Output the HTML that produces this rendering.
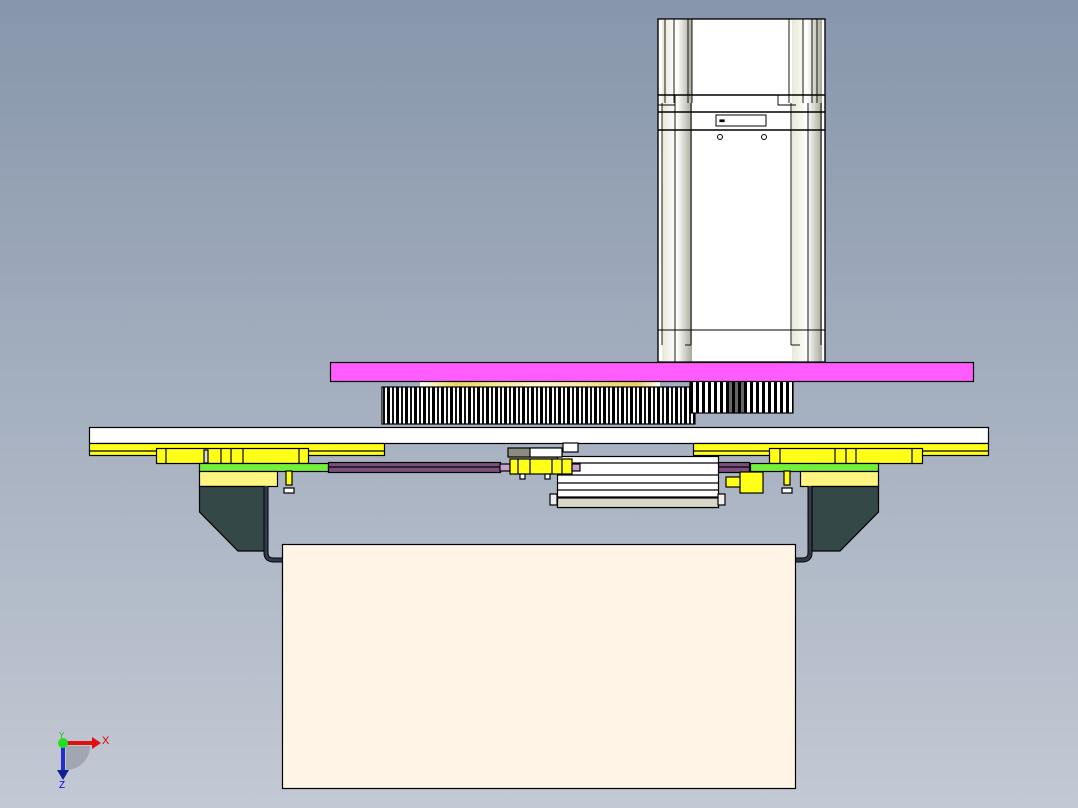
<!DOCTYPE html>
<html><head><meta charset="utf-8"><style>
html,body{margin:0;padding:0;width:1078px;height:808px;overflow:hidden}
body{background:linear-gradient(#8796ab,#c3c9d4)}
svg{display:block}
</style></head><body>
<svg width="1078" height="808" viewBox="0 0 1078 808" xmlns="http://www.w3.org/2000/svg" stroke="#000" stroke-width="1.2">
<defs>
<pattern id="g" width="9" height="40" patternUnits="userSpaceOnUse"><rect width="9" height="40" fill="#fff" stroke="none"/><rect x="0" width="3" height="40" fill="#000" stroke="none"/><rect x="5" width="2" height="40" fill="#111" stroke="none"/></pattern>
<pattern id="g2" width="6" height="40" patternUnits="userSpaceOnUse"><rect width="6" height="40" fill="#fff" stroke="none"/><rect x="0" width="3" height="40" fill="#000" stroke="none"/></pattern>
<linearGradient id="cyl" x1="0" x2="1"><stop offset="0" stop-color="#e8e8d8"/><stop offset=".5" stop-color="#fff"/><stop offset="1" stop-color="#a8a898"/></linearGradient>
<linearGradient id="gold" x1="0" x2="1"><stop offset="0" stop-color="#fff"/><stop offset=".15" stop-color="#e8d860"/><stop offset=".5" stop-color="#fff8d0"/><stop offset=".9" stop-color="#e8d060"/><stop offset="1" stop-color="#fff"/></linearGradient>
</defs>
<!-- motor -->
<rect x="658" y="19" width="167" height="343" fill="#fff"/>
<rect x="662" y="19" width="30" height="343" fill="url(#cyl)" stroke="none"/>
<rect x="792" y="19" width="30" height="343" fill="url(#cyl)" stroke="none"/>
<rect x="658" y="19" width="167" height="343" fill="none"/>
<g fill="none" stroke-width="0.9">
<line x1="665" y1="19" x2="665" y2="103"/><line x1="674" y1="19" x2="674" y2="103"/><line x1="688" y1="19" x2="688" y2="103"/><line x1="692" y1="19" x2="692" y2="103"/>
<line x1="789" y1="19" x2="789" y2="103"/><line x1="803" y1="19" x2="803" y2="103"/><line x1="812" y1="19" x2="812" y2="103"/><line x1="817" y1="19" x2="817" y2="103"/>
<line x1="662" y1="103" x2="662" y2="345"/><line x1="675" y1="103" x2="675" y2="362"/><line x1="691" y1="103" x2="691" y2="345"/>
<line x1="791" y1="103" x2="791" y2="345"/><line x1="808" y1="103" x2="808" y2="362"/><line x1="821" y1="103" x2="821" y2="345"/>
<line x1="658" y1="330" x2="825" y2="330"/><line x1="685" y1="345" x2="691" y2="345"/><line x1="791" y1="345" x2="800" y2="345"/>
<polyline points="658,105 675,105 675,95"/><polyline points="778,95 778,105 796,105"/>
</g>
<g stroke-width="1.6"><line x1="658" y1="95" x2="825" y2="95"/><line x1="658" y1="112" x2="825" y2="112"/><line x1="658" y1="130" x2="825" y2="130"/></g>
<rect x="716" y="115" width="50" height="11" fill="none" stroke-width="1"/>
<rect x="720" y="120" width="4" height="1.5" fill="#000"/>
<circle cx="720" cy="137" r="2.5" fill="none" stroke-width="1"/><circle cx="764" cy="137" r="2.5" fill="none" stroke-width="1"/>
<!-- gears -->
<rect x="420" y="381" width="240" height="7" fill="url(#gold)" stroke="none"/>
<rect x="382" y="387" width="313" height="37" fill="url(#g)"/>
<rect x="690" y="381" width="103" height="32" fill="url(#g2)"/>
<rect x="727" y="381" width="20" height="32" fill="#000" stroke="none" opacity=".6"/>
<!-- pink -->
<rect x="330.5" y="362.5" width="643" height="19" fill="#ff5cff"/>
<!-- plate -->
<rect x="89.5" y="427.5" width="899" height="16" fill="#fff"/>
<rect x="89.5" y="443.5" width="295" height="12" fill="#ffff18"/><line x1="89" y1="451" x2="384" y2="451"/>
<rect x="693.5" y="443.5" width="295" height="12" fill="#ffff18"/><line x1="693" y1="451" x2="988" y2="451"/>
<!-- blocks -->
<rect x="156.5" y="448.5" width="152" height="15" fill="#ffff18"/>
<line x1="166" y1="448" x2="166" y2="463"/><line x1="221" y1="448" x2="221" y2="463"/><line x1="231" y1="448" x2="231" y2="463"/><line x1="243" y1="448" x2="243" y2="463"/><line x1="299" y1="448" x2="299" y2="463"/>
<rect x="204" y="450" width="4" height="13" fill="#ddd"/>
<rect x="769.5" y="448.5" width="153" height="15" fill="#ffff18"/>
<line x1="780" y1="448" x2="780" y2="463"/><line x1="835" y1="448" x2="835" y2="463"/><line x1="846" y1="448" x2="846" y2="463"/><line x1="856" y1="448" x2="856" y2="463"/><line x1="912" y1="448" x2="912" y2="463"/>
<!-- green / light yellow / dark -->
<rect x="199.5" y="463.5" width="129" height="8" fill="#74f03c"/>
<rect x="199.5" y="471.5" width="78" height="15" fill="#fff580"/>
<polygon points="199.5,486.5 265,486.5 265,551 238,551 199.5,512" fill="#344848"/>
<rect x="750.5" y="463.5" width="128" height="8" fill="#74f03c"/>
<rect x="800.5" y="471.5" width="78" height="15" fill="#fff580"/>
<polygon points="812,486.5 878.5,486.5 878.5,512 840,551 812,551" fill="#344848"/>
<!-- pipes -->
<path d="M266 486 V553 Q266 560 274 560 H283" fill="none" stroke="#000" stroke-width="5"/>
<path d="M266 486 V553 Q266 560 274 560 H283" fill="none" stroke="#333a4c" stroke-width="3"/>
<path d="M810 486 V553 Q810 560 802 560 H795" fill="none" stroke="#000" stroke-width="5"/>
<path d="M810 486 V553 Q810 560 802 560 H795" fill="none" stroke="#333a4c" stroke-width="3"/>
<!-- bolts -->
<rect x="286" y="471" width="6" height="14" fill="#ffff18"/><rect x="284" y="488" width="10" height="5" fill="#fff"/>
<rect x="784" y="471" width="6" height="14" fill="#ffff18"/><rect x="782" y="488" width="10" height="5" fill="#fff"/>
<!-- rods -->
<rect x="328.5" y="462.5" width="172" height="10" fill="#7a4f7e"/><line x1="328" y1="467" x2="500" y2="467"/>
<rect x="579.5" y="462.5" width="170" height="10" fill="#7a4f7e"/><line x1="579" y1="467" x2="749" y2="467"/>
<!-- cylinder -->
<rect x="557.5" y="456.5" width="161" height="51" fill="#fff"/>
<line x1="557" y1="463" x2="718" y2="463"/><line x1="557" y1="475" x2="718" y2="475"/><line x1="557" y1="483" x2="718" y2="483"/><line x1="557" y1="490" x2="718" y2="490"/><line x1="557" y1="497" x2="718" y2="497"/>
<rect x="557.5" y="498" width="161" height="9.5" fill="#d8d8c8"/>
<rect x="550" y="494" width="7" height="11" fill="#eee"/><rect x="718" y="494" width="7" height="11" fill="#eee"/>
<rect x="740" y="472" width="23" height="21" fill="#ffff18"/><rect x="726" y="477" width="14" height="10" fill="#ffff18"/>
<rect x="508" y="448" width="54" height="9" fill="#8c8c80"/><rect x="530" y="448" width="32" height="9" fill="#fff"/>
<rect x="563" y="443" width="15" height="9" fill="#fff"/>
<!-- fitting -->
<rect x="500" y="464" width="10" height="7" fill="#c8a0d0"/>
<rect x="510" y="459" width="62" height="15" fill="#ffff18"/>
<line x1="518" y1="459" x2="518" y2="474"/><line x1="530" y1="459" x2="530" y2="474"/><line x1="552" y1="459" x2="552" y2="474"/><line x1="562" y1="459" x2="562" y2="474"/>
<rect x="572" y="464" width="8" height="7" fill="#c8a0d0"/>
<rect x="520" y="474" width="5" height="5" fill="#fff"/><rect x="545" y="474" width="5" height="5" fill="#fff"/>
<!-- beige box -->
<rect x="282.5" y="544.5" width="513" height="244" fill="#fff4e6"/>
<!-- triad -->
<path d="M66 746 H90 A24 24 0 0 1 66 770 Z" fill="#7c818a" stroke="none" opacity=".45"/>
<line x1="63" y1="743" x2="92" y2="743" stroke="#e01010" stroke-width="4"/>
<polygon points="92,737 101,743 92,749" fill="#e01010" stroke="none"/>
<line x1="63" y1="743" x2="63" y2="770" stroke="#2030d0" stroke-width="4"/>
<polygon points="57,770 69,770 63,780" fill="#102090" stroke="none"/>
<circle cx="63" cy="743" r="5" fill="#20e020" stroke="none"/>
<text x="102" y="744" font-family="Liberation Sans, sans-serif" font-size="11" fill="#e00000" stroke="none">X</text>
<text x="59" y="788" font-family="Liberation Sans, sans-serif" font-size="10" fill="#0000e0" stroke="none">Z</text>
<text x="59" y="738" font-family="Liberation Sans, sans-serif" font-size="8" fill="#10c010" stroke="none">Y</text>
</svg>
</body></html>
